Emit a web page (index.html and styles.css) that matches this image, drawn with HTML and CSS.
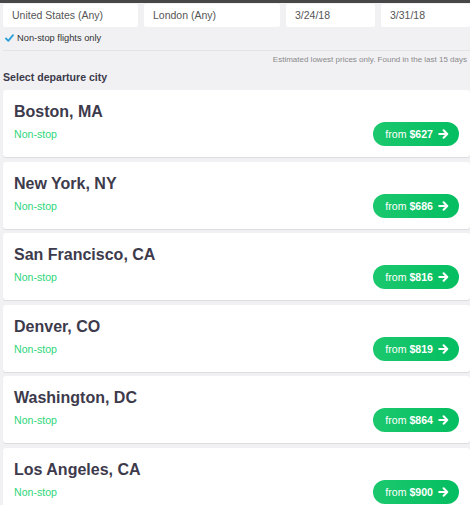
FILE: index.html
```html
<!DOCTYPE html>
<html>
<head>
<meta charset="utf-8">
<link rel="stylesheet" href="styles.css">
</head>
<body>
<div class="topbar"></div>
<div class="search">
  <div class="field f1">United States (Any)</div>
  <div class="field f2">London (Any)</div>
  <div class="field f3">3/24/18</div>
  <div class="field f4">3/31/18</div>
</div>
<div class="option">
  <svg class="check" width="9" height="8" viewBox="0 0 9 8"><polyline points="1,4.5 3.3,6.8 8,1.2" fill="none" stroke="#2a9fd8" stroke-width="1.8" stroke-linecap="round" stroke-linejoin="round"/></svg>
  <span>Non-stop flights only</span>
</div>
<div class="rule"></div>
<div class="note">Estimated lowest prices only. Found in the last 15 days</div>
<div class="heading">Select departure city</div>
<div class="list">
  <div class="card"><div class="city">Boston, MA</div><div class="row"><span class="stops">Non-stop</span><span class="btn">from <b>$627</b><svg class="arrow" width="11" height="10" viewBox="0 0 11 10"><path d="M1.2 5H9.3M5.6 1.3L9.3 5L5.6 8.7" fill="none" stroke="#fff" stroke-width="2" stroke-linecap="round" stroke-linejoin="round"/></svg></span></div></div>
  <div class="card"><div class="city">New York, NY</div><div class="row"><span class="stops">Non-stop</span><span class="btn">from <b>$686</b><svg class="arrow" width="11" height="10" viewBox="0 0 11 10"><path d="M1.2 5H9.3M5.6 1.3L9.3 5L5.6 8.7" fill="none" stroke="#fff" stroke-width="2" stroke-linecap="round" stroke-linejoin="round"/></svg></span></div></div>
  <div class="card"><div class="city">San Francisco, CA</div><div class="row"><span class="stops">Non-stop</span><span class="btn">from <b>$816</b><svg class="arrow" width="11" height="10" viewBox="0 0 11 10"><path d="M1.2 5H9.3M5.6 1.3L9.3 5L5.6 8.7" fill="none" stroke="#fff" stroke-width="2" stroke-linecap="round" stroke-linejoin="round"/></svg></span></div></div>
  <div class="card"><div class="city">Denver, CO</div><div class="row"><span class="stops">Non-stop</span><span class="btn">from <b>$819</b><svg class="arrow" width="11" height="10" viewBox="0 0 11 10"><path d="M1.2 5H9.3M5.6 1.3L9.3 5L5.6 8.7" fill="none" stroke="#fff" stroke-width="2" stroke-linecap="round" stroke-linejoin="round"/></svg></span></div></div>
  <div class="card"><div class="city">Washington, DC</div><div class="row"><span class="stops">Non-stop</span><span class="btn">from <b>$864</b><svg class="arrow" width="11" height="10" viewBox="0 0 11 10"><path d="M1.2 5H9.3M5.6 1.3L9.3 5L5.6 8.7" fill="none" stroke="#fff" stroke-width="2" stroke-linecap="round" stroke-linejoin="round"/></svg></span></div></div>
  <div class="card"><div class="city">Los Angeles, CA</div><div class="row"><span class="stops">Non-stop</span><span class="btn">from <b>$900</b><svg class="arrow" width="11" height="10" viewBox="0 0 11 10"><path d="M1.2 5H9.3M5.6 1.3L9.3 5L5.6 8.7" fill="none" stroke="#fff" stroke-width="2" stroke-linecap="round" stroke-linejoin="round"/></svg></span></div></div>
</div>
</body>
</html>
```
FILE: styles.css
```css
html, body {
  margin: 0;
  padding: 0;
}
body {
  background: #f1f1f4;
  font-family: "Liberation Sans", Arial, sans-serif;
  width: 470px;
  overflow: hidden;
}
.topbar {
  height: 3px;
  background: #474747;
}
.search {
  display: flex;
  gap: 6px;
  padding: 1px 0 0 3px;
}
.field {
  height: 23px;
  line-height: 23px;
  background: #fff;
  border-radius: 2px;
  font-size: 10.5px;
  color: #555;
  padding-left: 9px;
  box-sizing: border-box;
  white-space: nowrap;
}
.f1 { width: 135px; }
.f2 { width: 136px; }
.f3 { width: 89px; }
.f4 { flex: 1; }
.option {
  display: flex;
  align-items: center;
  height: 14px;
  margin-top: 4px;
  padding-left: 5px;
  font-size: 9.3px;
  color: #333;
}
.check {
  margin-right: 3px;
}
.rule {
  height: 1px;
  background: #e3e3e8;
  margin: 5px 0 0 3px;
}
.note {
  text-align: right;
  font-size: 8px;
  line-height: 12px;
  color: #8a8a8a;
  margin-top: 3px;
  padding-right: 3px;
}
.heading {
  font-size: 10.6px;
  font-weight: bold;
  line-height: 12px;
  color: #3b3a4a;
  margin-top: 5px;
  padding-left: 3px;
}
.list {
  display: flex;
  flex-direction: column;
  gap: 4.5px;
  margin-top: 7px;
  padding-left: 3px;
}
.card {
  height: 67px;
  box-sizing: border-box;
  background: #fff;
  border-radius: 3px;
  box-shadow: 0 1px 1px rgba(0,0,0,0.09);
  padding: 12px 11px 11px 11px;
}
.city {
  font-size: 16px;
  font-weight: bold;
  line-height: 20px;
  color: #3d3a4c;
}
.row {
  display: flex;
  align-items: center;
  justify-content: space-between;
  height: 24px;
}
.stops {
  font-size: 10.6px;
  color: #2ed67b;
}
.btn {
  display: flex;
  align-items: center;
  height: 24px;
  padding: 0 10px 0 12px;
  border-radius: 12px;
  background: linear-gradient(90deg, #1cc86d, #04be61);
  color: #fff;
  font-size: 10.6px;
  white-space: pre;
}
.btn b {
  font-weight: bold;
}
.arrow {
  margin-left: 5px;
}
```
